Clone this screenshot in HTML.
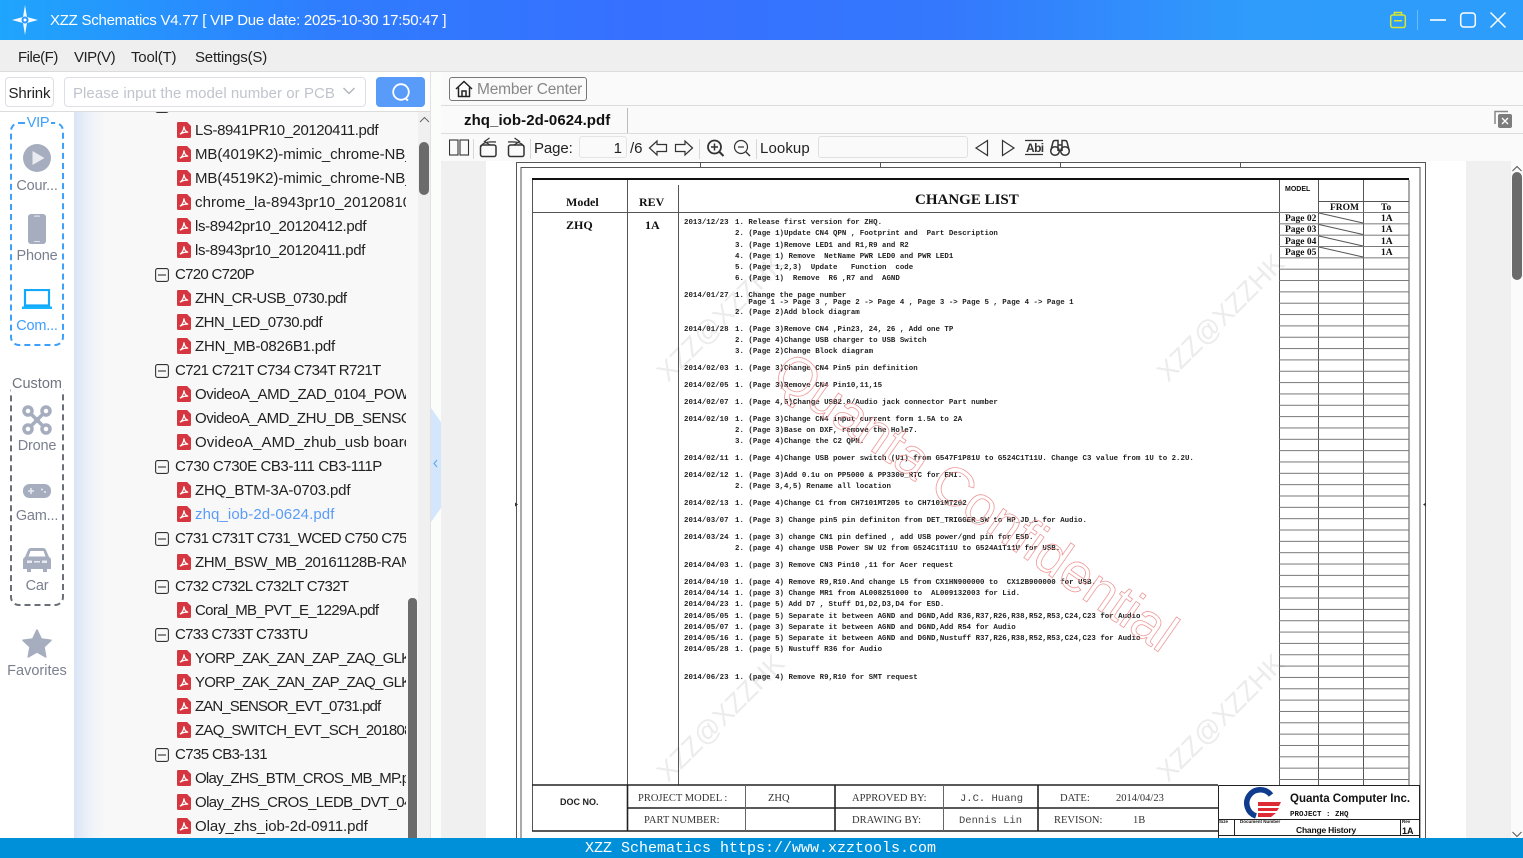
<!DOCTYPE html>
<html><head><meta charset="utf-8"><title>XZZ Schematics</title>
<style>
*{box-sizing:border-box}
html,body{margin:0;padding:0;width:1523px;height:858px;overflow:hidden;background:#fff;font-family:"Liberation Sans","Noto Sans CJK SC",sans-serif;color:#222}
.a{position:absolute;white-space:nowrap}
#tree{position:absolute;left:74px;top:112px;width:332px;height:726px;overflow:hidden;font-size:15px;letter-spacing:-.42px;color:#222}
#tree .rows{position:absolute;left:0;top:7px;width:332px}
#tree .r{position:relative;height:24px;line-height:24px;white-space:nowrap;padding-left:121px}
#tree .g{padding-left:101px}
#tree .r svg{position:absolute;left:103px;top:3px;width:14px;height:16px}
#tree .g svg{left:81px;top:5px;width:14px;height:14px}
.side{position:absolute;left:0;width:74px;text-align:center;font-size:14.5px;color:#7a8090;letter-spacing:-.2px;line-height:20px}
#doc{position:absolute;left:684px;top:1px;font:bold 7.4px/8px "Liberation Mono",monospace;letter-spacing:.02px;color:#222;white-space:pre}
#doc div{position:absolute;left:0}
#doc b{display:inline-block;width:51px;font-weight:bold}
.sep{position:absolute;top:139px;width:1px;height:20px;background:#d8d8d8}
.tb{position:absolute;font-size:15px;letter-spacing:-.1px;color:#222;white-space:nowrap;line-height:20px;top:139px}
.m{position:absolute;top:48px;font-size:15px;line-height:20px;white-space:nowrap}
</style></head><body>
<svg width="0" height="0" style="position:absolute"><defs>
<symbol id="pdf" viewBox="0 0 14 16"><path d="M0 1.2Q0 0 1.2 0H10L14 4V14.8Q14 16 12.8 16H1.2Q0 16 0 14.8Z" fill="#d5363f"/><path d="M3 12.2C5 11 6.6 8 7 4.5C7.4 8 9 10 11.2 10.2C9 10 5.5 10.6 3 12.2Z" fill="none" stroke="#fff" stroke-width="1.2"/></symbol>
<symbol id="minus" viewBox="0 0 14 14"><rect x=".6" y=".6" width="12.8" height="12.8" rx="2" fill="none" stroke="#333" stroke-width="1.1"/><path d="M3 7H11" stroke="#333" stroke-width="1.1"/></symbol>
</defs></svg>

<!-- title bar -->
<div class="a" style="left:0;top:0;width:1523px;height:40px;background:linear-gradient(90deg,#1fa5fd 0,#2f7cfe 22%,#3670ff 42%,#3478fd 62%,#2f9bfb 82%,#2d9dfb 100%)"></div>
<svg class="a" style="left:11px;top:5px" width="28" height="30" viewBox="0 0 28 30"><path d="M14 0L16 12L27 15L16 18L14 30L12 18L1 15L12 12Z" fill="#fff" opacity=".95"/><circle cx="14" cy="15" r="3.5" fill="#2a98fc"/><circle cx="14" cy="15" r="1.5" fill="#fff"/></svg>
<div class="a" style="left:50px;top:11px;color:#fff;font-size:15px;letter-spacing:-.25px;line-height:20px">XZZ Schematics V4.77 [ VIP Due date: 2025-10-30 17:50:47 ]</div>
<svg class="a" style="left:1385px;top:8px" width="130" height="24" viewBox="0 0 130 24">
<g fill="none" stroke="#d9e62d" stroke-width="1.5"><rect x="5.7" y="7" width="14.6" height="12.5" rx="2"/><path d="M9.5 7V4.5H16.5V7M9 12.7H17"/></g>
<path d="M32.5 2V22" stroke="#6cbcfb" stroke-width="1"/>
<path d="M45 12H61" stroke="#fff" stroke-width="1.6"/>
<rect x="75.7" y="5" width="14.6" height="14" rx="3" fill="none" stroke="#fff" stroke-width="1.5"/>
<path d="M105.5 4.5L120.5 19.5M120.5 4.5L105.5 19.5" stroke="#fff" stroke-width="1.5"/>
</svg>

<!-- menu -->
<div class="a" style="left:0;top:40px;width:1523px;height:32px;background:#efefef;border-bottom:1px solid #dcdcdc"></div>
<div class="m" style="left:18px;letter-spacing:-.5px">File(F)</div>
<div class="m" style="left:74px;letter-spacing:-.5px">VIP(V)</div>
<div class="m" style="left:131px;letter-spacing:-.2px">Tool(T)</div>
<div class="m" style="left:195px;letter-spacing:-.2px">Settings(S)</div>

<!-- left toolbar -->
<div class="a" style="left:0;top:72px;width:431px;height:40px;background:#fff;border-bottom:1px solid #dcdcdc"></div>
<div class="a" style="left:5px;top:77px;width:49px;height:30px;border:1px solid #dcdfe6;border-radius:4px;text-align:center;line-height:31px;font-size:15px;letter-spacing:-.1px">Shrink</div>
<div class="a" style="left:64px;top:77px;width:302px;height:30px;border:1px solid #dcdfe6;border-radius:4px;line-height:31px;font-size:15px;letter-spacing:.05px;color:#c0c4cc;padding-left:8px">Please input the model number or PCB</div>
<svg class="a" style="left:342px;top:86px" width="14" height="10" viewBox="0 0 14 10"><path d="M1.5 2L7 7.5L12.500 2" fill="none" stroke="#b0b4bc" stroke-width="1.4"/></svg>
<div class="a" style="left:376px;top:77px;width:49px;height:30px;background:#589bf9;border-radius:4px"></div>
<svg class="a" style="left:390px;top:81px" width="22" height="22" viewBox="0 0 22 22"><circle cx="11" cy="11" r="7.8" fill="none" stroke="#fff" stroke-width="1.8"/><path d="M15 17L18 19.5" stroke="#fff" stroke-width="1.8"/></svg>

<!-- sidebar -->
<div class="a" style="left:10px;top:122px;width:54px;height:224px;border:2px dashed #3da0fb;border-radius:9px"></div>
<div class="a" style="left:25px;top:113px;width:26px;height:20px;background:#fff;text-align:center;color:#3da0fb;font-size:14.5px;line-height:20px;letter-spacing:-.3px">VIP</div>
<svg class="a" style="left:23px;top:144px" width="28" height="28" viewBox="0 0 28 28"><circle cx="14" cy="14" r="14" fill="#a5adbf"/><path d="M9.5 7L21.5 14L9.5 21Z" fill="#e9ebf0"/></svg>
<div class="side" style="top:176px">Cour...</div>
<svg class="a" style="left:28px;top:214px" width="18" height="30" viewBox="0 0 18 30"><rect width="18" height="30" rx="3" fill="#a5adbf"/><rect x="6" y="1.5" width="6" height="1.3" rx=".6" fill="#dfe2e9"/><rect x="6" y="27" width="6" height="1" fill="#dfe2e9"/></svg>
<div class="side" style="top:246px">Phone</div>
<svg class="a" style="left:22px;top:289px" width="30" height="20" viewBox="0 0 30 20"><rect x="3" y="1" width="24" height="15.5" fill="none" stroke="#12a9fc" stroke-width="2.2"/><path d="M0 17.5H30V20H0Z" fill="#18b4fd"/></svg>
<div class="side" style="top:316px;color:#3d9dfb">Com...</div>

<div class="a" style="left:10px;top:384px;width:54px;height:222px;border:2px dashed #6a6f78;border-radius:9px"></div>
<div class="a" style="left:11px;top:374px;width:52px;height:20px;background:#fff;text-align:center;color:#6f7480;font-size:14.5px;line-height:20px;letter-spacing:0">Custom</div>
<svg class="a" style="left:22px;top:405px" width="30" height="30" viewBox="0 0 30 30"><g fill="none" stroke="#a5adbf" stroke-width="3.5"><circle cx="6" cy="6" r="4"/><circle cx="24" cy="6" r="4"/><circle cx="6" cy="24" r="4"/><circle cx="24" cy="24" r="4"/><path d="M8 8L22 22M22 8L8 22"/></g><circle cx="15" cy="15" r="3" fill="#a5adbf"/></svg>
<div class="side" style="top:436px">Drone</div>
<svg class="a" style="left:23px;top:484px" width="28" height="14" viewBox="0 0 28 14"><rect width="28" height="14" rx="6.5" fill="#a5adbf"/><path d="M5 7H11M8 4V10" stroke="#e9ebf0" stroke-width="1.5"/><circle cx="19" cy="5.5" r="1" fill="#e9ebf0"/><circle cx="22" cy="8" r="1" fill="#e9ebf0"/></svg>
<div class="side" style="top:506px">Gam...</div>
<svg class="a" style="left:23px;top:548px" width="28" height="24" viewBox="0 0 28 24"><path d="M5 2Q6 0 8 0H20Q22 0 23 2L26 9Q28 10 28 12V21H24V24H20V21H8V24H4V21H0V12Q0 10 2 9ZM7.5 3L5.5 8.5H22.5L20.5 3Z" fill="#a5adbf" fill-rule="evenodd"/><rect x="4" y="12.5" width="5" height="2.5" fill="#e9ebf0"/><rect x="19" y="12.5" width="5" height="2.5" fill="#e9ebf0"/><rect x="11" y="13" width="6" height="1.5" fill="#e9ebf0"/></svg>
<div class="side" style="top:576px">Car</div>
<svg class="a" style="left:22px;top:629px" width="30" height="29" viewBox="0 0 30 29"><path d="M15 1L19.3 10L29 11.3L22 18L23.8 28L15 23L6.2 28L8 18L1 11.3L10.7 10Z" fill="#a5adbf" stroke="#a5adbf" stroke-linejoin="round" stroke-width="1.5"/></svg>
<div class="side" style="top:661px;letter-spacing:0">Favorites</div>

<!-- tree -->
<div class="a" style="left:74px;top:112px;width:344px;height:726px;background:linear-gradient(90deg,#d9e4f5 0,#eef2f9 16px,#f8f8f8 32px,#f8f8f8 100%)"></div>
<div class="a" style="left:418px;top:112px;width:13px;height:726px;background:#f0f0f0"></div>
<div id="tree">
<svg style="position:absolute;left:81px;top:-13px;width:14px;height:14px"><use href="#minus"/></svg>
<div class="rows">
<div class="r"><svg><use href="#pdf"/></svg>LS-8941PR10_20120411.pdf</div>
<div class="r" style="letter-spacing:-.09px"><svg><use href="#pdf"/></svg>MB(4019K2)-mimic_chrome-NB_20120411.pdf</div>
<div class="r" style="letter-spacing:-.09px"><svg><use href="#pdf"/></svg>MB(4519K2)-mimic_chrome-NB_20120411.pdf</div>
<div class="r" style="letter-spacing:.1px"><svg><use href="#pdf"/></svg>chrome_la-8943pr10_20120810.pdf</div>
<div class="r" style="letter-spacing:-.34px"><svg><use href="#pdf"/></svg>ls-8942pr10_20120412.pdf</div>
<div class="r" style="letter-spacing:-.34px"><svg><use href="#pdf"/></svg>ls-8943pr10_20120411.pdf</div>
<div class="r g" style="letter-spacing:-.7px"><svg><use href="#minus"/></svg>C720 C720P</div>
<div class="r" style="letter-spacing:-.63px"><svg><use href="#pdf"/></svg>ZHN_CR-USB_0730.pdf</div>
<div class="r" style="letter-spacing:-.5px"><svg><use href="#pdf"/></svg>ZHN_LED_0730.pdf</div>
<div class="r" style="letter-spacing:-.2px"><svg><use href="#pdf"/></svg>ZHN_MB-0826B1.pdf</div>
<div class="r g" style="letter-spacing:-.64px"><svg><use href="#minus"/></svg>C721 C721T C734 C734T R721T</div>
<div class="r"><svg><use href="#pdf"/></svg>OvideoA_AMD_ZAD_0104_POWER.pdf</div>
<div class="r" style="letter-spacing:-.47px"><svg><use href="#pdf"/></svg>OvideoA_AMD_ZHU_DB_SENSOR.pdf</div>
<div class="r" style="letter-spacing:.08px"><svg><use href="#pdf"/></svg>OvideoA_AMD_zhub_usb board.pdf</div>
<div class="r g"><svg><use href="#minus"/></svg>C730 C730E CB3-111 CB3-111P</div>
<div class="r" style="letter-spacing:-.16px"><svg><use href="#pdf"/></svg>ZHQ_BTM-3A-0703.pdf</div>
<div class="r" style="color:#5b9cf8;letter-spacing:.1px"><svg><use href="#pdf"/></svg>zhq_iob-2d-0624.pdf</div>
<div class="r g" style="letter-spacing:-.65px"><svg><use href="#minus"/></svg>C731 C731T C731_WCED C750 C750T</div>
<div class="r"><svg><use href="#pdf"/></svg>ZHM_BSW_MB_20161128B-RAMP.pdf</div>
<div class="r g" style="letter-spacing:-.68px"><svg><use href="#minus"/></svg>C732 C732L C732LT C732T</div>
<div class="r" style="letter-spacing:-.66px"><svg><use href="#pdf"/></svg>Coral_MB_PVT_E_1229A.pdf</div>
<div class="r g" style="letter-spacing:-.72px"><svg><use href="#minus"/></svg>C733 C733T C733TU</div>
<div class="r" style="letter-spacing:-.75px"><svg><use href="#pdf"/></svg>YORP_ZAK_ZAN_ZAP_ZAQ_GLK_MB.pdf</div>
<div class="r" style="letter-spacing:-.75px"><svg><use href="#pdf"/></svg>YORP_ZAK_ZAN_ZAP_ZAQ_GLK_IO.pdf</div>
<div class="r" style="letter-spacing:-.9px"><svg><use href="#pdf"/></svg>ZAN_SENSOR_EVT_0731.pdf</div>
<div class="r" style="letter-spacing:-.7px"><svg><use href="#pdf"/></svg>ZAQ_SWITCH_EVT_SCH_20180808.pdf</div>
<div class="r g" style="letter-spacing:-.6px"><svg><use href="#minus"/></svg>C735 CB3-131</div>
<div class="r" style="letter-spacing:-.75px"><svg><use href="#pdf"/></svg>Olay_ZHS_BTM_CROS_MB_MP.pdf</div>
<div class="r" style="letter-spacing:-.6px"><svg><use href="#pdf"/></svg>Olay_ZHS_CROS_LEDB_DVT_0416.pdf</div>
<div class="r" style="letter-spacing:-.09px"><svg><use href="#pdf"/></svg>Olay_zhs_iob-2d-0911.pdf</div>
</div></div>
<div class="a" style="left:408px;top:598px;width:9px;height:240px;background:#6b6b6b;border-radius:4px 4px 0 0"></div>
<div class="a" style="left:419px;top:142px;width:10px;height:53px;background:#6b6b6b;border-radius:5px"></div>
<svg class="a" style="left:419px;top:116px" width="11" height="8" viewBox="0 0 11 8"><path d="M1 6L5.5 1.5L10 6" fill="none" stroke="#666" stroke-width="1"/></svg>

<!-- splitter -->
<div class="a" style="left:430px;top:72px;width:11px;height:766px;background:#fbfdfb;border-left:1px solid #e2e2e2"></div>
<svg class="a" style="left:431px;top:408px" width="10" height="114" viewBox="0 0 10 114"><path d="M0 0L10 14V100L0 114Z" fill="#d3e6fb"/><path d="M6 52L3 55.5L6 59" fill="none" stroke="#5ba3ee" stroke-width="1"/></svg>

<!-- right header -->
<div class="a" style="left:441px;top:72px;width:1082px;height:34px;background:#fafafa;border-bottom:1px solid #dcdcdc"></div>
<div class="a" style="left:449px;top:77px;width:138px;height:24px;border:1px solid #777;border-radius:3px;background:#fafafa"></div>
<svg class="a" style="left:455px;top:80px" width="18" height="18" viewBox="0 0 18 18"><path d="M1 9L9 1.5L17 9M3.5 7.5V16.5H14.5V7.5M7 16.5V11H11V16.500" fill="none" stroke="#222" stroke-width="1.5"/></svg>
<div class="a" style="left:477px;top:80px;color:#888;font-size:15.5px;letter-spacing:-.2px;line-height:20px">Member Center</div>
<div class="a" style="left:441px;top:106px;width:1082px;height:28px;background:#fafafa;border-bottom:1px solid #dcdcdc"></div>
<div class="a" style="left:627px;top:108px;width:1px;height:25px;background:#bbb"></div>
<div class="a" style="left:464px;top:111px;font-size:15px;font-weight:bold;letter-spacing:.07px;line-height:20px;color:#111">zhq_iob-2d-0624.pdf</div>
<svg class="a" style="left:1494px;top:110px" width="19" height="19" viewBox="0 0 19 19"><path d="M1 14V1.5H14" fill="none" stroke="#888" stroke-width="1.5"/><rect x="4" y="4" width="14" height="14" rx="2" fill="#7d7d7d"/><path d="M8 8L14 14M14 8L8 14" stroke="#fff" stroke-width="1.3"/></svg>

<!-- toolbar -->
<div class="a" style="left:441px;top:134px;width:1082px;height:27px;background:#fafafa"></div>
<svg class="a" style="left:449px;top:135px" width="625" height="25" viewBox="449 135 625 25">
<g fill="none" stroke="#333" stroke-width="1.1">
<rect x="449.5" y="140" width="8.5" height="15"/><rect x="460" y="140" width="8.5" height="15"/>
<rect x="480.5" y="145" width="15.5" height="11.5" rx="2" stroke-width="1.5"/><path d="M481 147Q482 141 496 142M489.5 138L484.5 141.500L490 145" stroke-width="1.2"/>
<rect x="508.5" y="145" width="15.5" height="11.5" rx="2" stroke-width="1.5"/><path d="M524 147Q522 141 508 142M514.500 138L519.5 141.5L514 145" stroke-width="1.2"/>
<path d="M649.5 148L657 141V144.5H666.5V151.5H657V155Z" stroke-width="1.2"/>
<path d="M692.5 148L685 141V144.5H675.5V151.5H685V155Z" stroke-width="1.2"/>
<circle cx="714.5" cy="147" r="6.5" stroke-width="1.8"/><path d="M719.5 152L723.5 156" stroke-width="2"/><path d="M711 147H718M714.5 143.5V150.5" stroke-width="1.5"/>
<circle cx="741" cy="147" r="6.5" stroke-width="1.2"/><path d="M746 152L750 156" stroke-width="1.4"/><path d="M738 147H744" stroke-width="1.2"/>
<path d="M987.5 140.5L976 148L987.5 155.5Z" stroke-width="1.2"/>
<path d="M1002.5 140.5L1014 148L1002.5 155.5Z" stroke-width="1.2"/>
<path d="M1025 140.5H1043M1025 154.5H1043" stroke-width="1.2"/>
<circle cx="1055" cy="151" r="4.3" stroke-width="1.5"/><circle cx="1065" cy="151" r="4.3" stroke-width="1.5"/><path d="M1051 150L1053 142Q1053.5 140.5 1055 140.5H1058V151M1069 150L1067 142Q1066.5 140.5 1065 140.5H1062V151M1058 145H1062" stroke-width="1.5"/>
</g></svg>
<div class="a" style="left:1026px;top:141px;font-size:12px;font-weight:bold;letter-spacing:-.6px;line-height:14px;color:#333">Abi</div>
<div class="sep" style="left:473px"></div><div class="sep" style="left:530px"></div><div class="sep" style="left:699px"></div><div class="sep" style="left:756px"></div>
<div class="tb" style="left:534px">Page:</div>
<div class="a" style="left:579px;top:136px;width:48px;height:22px;border:1px solid #e4e4e4;border-radius:3px;background:#fafafa;text-align:right;font-size:15px;line-height:23px;padding-right:4px">1</div>
<div class="tb" style="left:630px">/6</div>
<div class="tb" style="left:760px;letter-spacing:.1px">Lookup</div>
<div class="a" style="left:818px;top:136px;width:150px;height:22px;border:1px solid #e0e0e0;border-radius:3px;background:#fafafa"></div>

<!-- pdf viewport -->
<div class="a" style="left:441px;top:161px;width:1070px;height:677px;background:#f0f0f0"></div>
<div class="a" style="left:486px;top:161px;width:980px;height:677px;background:#fff"></div>
<div class="a" style="left:1511px;top:161px;width:12px;height:677px;background:#fbfbfb"></div>
<div class="a" style="left:1512px;top:172px;width:10px;height:108px;background:#6b6b6b;border-radius:5px"></div>
<svg class="a" style="left:1511px;top:165px" width="12" height="7" viewBox="0 0 12 7"><path d="M1.5 6L6 1.5L10.5 6" fill="none" stroke="#555" stroke-width="1"/></svg>
<svg class="a" style="left:1511px;top:831px" width="12" height="7" viewBox="0 0 12 7"><path d="M1.5 1L6 5.5L10.5 1" fill="none" stroke="#555" stroke-width="1"/></svg>

<svg class="a" style="left:0;top:0" width="1523" height="858" viewBox="0 0 1523 858">
<defs><clipPath id="vp"><rect x="486" y="161" width="980" height="677"/></clipPath>
<pattern id="rowp" patternUnits="userSpaceOnUse" x="1279" y="212" width="140" height="11.34"><path d="M0 .5H130" stroke="#777" stroke-width="1"/></pattern></defs>
<g clip-path="url(#vp)">
<!-- watermarks -->
<g font-family="Liberation Sans, sans-serif" font-size="27" fill="#ececec">
<text transform="translate(668,383) rotate(-45)">XZZ@XZZHK</text>
<text transform="translate(1168,383) rotate(-45)">XZZ@XZZHK</text>
<text transform="translate(668,783) rotate(-45)">XZZ@XZZHK</text>
<text transform="translate(1168,783) rotate(-45)">XZZ@XZZHK</text>
</g>
<g fill="none" stroke="#555" stroke-width="1">
<rect x="516.5" y="162.5" width="909" height="700"/>
<rect x="521" y="167.5" width="899" height="690"/>
<path d="M700.5 163V167M880.5 163V167M1060.5 163V167M1240.5 163V167"/>
<path d="M627.5 180V831M678.5 185V785M532.5 180V831M532 212.5H1280"/>
<path d="M1279.5 180V785M1318.5 180V785M1363.5 180V785M1409 180V785M1318 201.5H1409"/>
<path d="M1319 213L1363 223M1319 224.5L1363 234.5M1319 236L1363 246M1319 247L1363 257"/>
</g>
<rect x="1279" y="212" width="130" height="573" fill="url(#rowp)"/>
<rect x="532" y="178" width="877" height="2" fill="#111"/>
<path d="M518 504.5l-3 -2v4zM1423 504.5l3 -2v4z" fill="#333"/>
<g font-family="Liberation Serif, serif" font-weight="bold" fill="#111">
<text x="566" y="206" font-size="12">Model</text>
<text x="639" y="206" font-size="12">REV</text>
<text x="915" y="204" font-size="15">CHANGE LIST</text>
<text x="566" y="229" font-size="12">ZHQ</text>
<text x="645" y="229" font-size="12">1A</text>
<text x="1330" y="210" font-size="9.5">FROM</text>
<text x="1381" y="210" font-size="9.5">To</text>
<g font-size="9.5">
<text x="1285" y="221">Page 02</text><text x="1285" y="232">Page 03</text><text x="1285" y="244">Page 04</text><text x="1285" y="255">Page 05</text>
<text x="1381" y="221">1A</text><text x="1381" y="232">1A</text><text x="1381" y="244">1A</text><text x="1381" y="255">1A</text>
</g></g>
<text x="1285" y="191" font-family="Liberation Sans, sans-serif" font-weight="bold" font-size="7" fill="#111">MODEL</text>

<!-- title block -->
<path d="M532 785H1218M532 831H1218M627 808H1218M835 785V831M1038 785V831M627.5 785V831" stroke="#222" stroke-width="1.6" fill="none"/>
<path d="M745.5 785V831M943.5 785V831" stroke="#666" stroke-width="1" fill="none"/>
<rect x="1218" y="785" width="202" height="53" fill="#fff"/>
<path d="M1218.5 785.5H1419.5V838M1218.5 785.5V838M1218 819.5H1420M1218 835.5H1420M1234.5 820V836M1400.5 820V836" stroke="#222" stroke-width="1" fill="none"/>
<g font-family="Liberation Serif, serif" font-size="10.5" fill="#333">
<text x="638" y="801">PROJECT MODEL :</text><text x="768" y="801">ZHQ</text>
<text x="852" y="801">APPROVED BY:</text><text x="1060" y="801">DATE:</text><text x="1116" y="801">2014/04/23</text>
<text x="644" y="823">PART NUMBER:</text><text x="852" y="823">DRAWING BY:</text>
<text x="1054" y="823">REVISON:</text><text x="1133" y="823">1B</text>
</g>
<g font-family="Liberation Mono, monospace" font-size="10.5" fill="#444">
<text x="960" y="801">J.C. Huang</text><text x="959" y="823">Dennis Lin</text></g>
<text x="560" y="805" font-family="Liberation Sans, sans-serif" font-weight="bold" font-size="9" fill="#222">DOC NO.</text>
<path d="M1271 795A13.5 13.5 0 1 0 1256 816" fill="none" stroke="#0f3c8c" stroke-width="5.5"/>
<path d="M1258 802H1281L1279 806H1258ZM1258 808H1279L1277 811H1258ZM1258 813H1276L1271 817H1258Z" fill="#dd2a34"/>
<text x="1290" y="802" font-family="Liberation Sans, sans-serif" font-weight="bold" font-size="11.5" fill="#111">Quanta Computer Inc.</text>
<text x="1290" y="816" font-family="Liberation Mono, monospace" font-weight="bold" font-size="7.5" fill="#111">PROJECT : ZHQ</text>
<text x="1219" y="823" font-family="Liberation Sans, sans-serif" font-weight="bold" font-size="4.5" fill="#111">Size</text>
<text x="1240" y="823" font-family="Liberation Sans, sans-serif" font-weight="bold" font-size="4.5" fill="#111">Document Number</text>
<text x="1402" y="823" font-family="Liberation Sans, sans-serif" font-weight="bold" font-size="4.5" fill="#111">Rev</text>
<text x="1296" y="833" font-family="Liberation Sans, sans-serif" font-weight="bold" font-size="8.5" letter-spacing="-.2" fill="#111">Change History</text>
<text x="1402" y="834" font-family="Liberation Sans, sans-serif" font-weight="bold" font-size="9" fill="#111">1A</text>
</g></svg>

<div id="doc">
<div style="top:218px"><b>2013/12/23</b>1. Release first version for ZHQ.</div>
<div style="top:229px"><b></b>2. (Page 1)Update CN4 QPN , Footprint and  Part Description</div>
<div style="top:241px"><b></b>3. (Page 1)Remove LED1 and R1,R9 and R2</div>
<div style="top:252px"><b></b>4. (Page 1) Remove  NetName PWR LED0 and PWR LED1</div>
<div style="top:263px"><b></b>5. (Page 1,2,3)  Update   Function  code</div>
<div style="top:274px"><b></b>6. (Page 1)  Remove  R6 ,R7 and  AGND</div>
<div style="top:291px"><b>2014/01/27</b>1. Change the page number</div>
<div style="top:298px"><b></b>   Page 1 -&gt; Page 3 , Page 2 -&gt; Page 4 , Page 3 -&gt; Page 5 , Page 4 -&gt; Page 1</div>
<div style="top:308px"><b></b>2. (Page 2)Add block diagram</div>
<div style="top:325px"><b>2014/01/28</b>1. (Page 3)Remove CN4 ,Pin23, 24, 26 , Add one TP</div>
<div style="top:336px"><b></b>2. (Page 4)Change USB charger to USB Switch</div>
<div style="top:347px"><b></b>3. (Page 2)Change Block diagram</div>
<div style="top:364px"><b>2014/02/03</b>1. (Page 3)Change CN4 Pin5 pin definition</div>
<div style="top:381px"><b>2014/02/05</b>1. (Page 3)Remove CN4 Pin10,11,15</div>
<div style="top:398px"><b>2014/02/07</b>1. (Page 4,5)Change USB2.0/Audio jack connector Part number</div>
<div style="top:415px"><b>2014/02/10</b>1. (Page 3)Change CN4 input current form 1.5A to 2A</div>
<div style="top:426px"><b></b>2. (Page 3)Base on DXF, remove the Hole7.</div>
<div style="top:437px"><b></b>3. (Page 4)Change the C2 QPN.</div>
<div style="top:454px"><b>2014/02/11</b>1. (Page 4)Change USB power switch (U1) from G547F1P81U to G524C1T11U. Change C3 value from 1U to 2.2U.</div>
<div style="top:471px"><b>2014/02/12</b>1. (Page 3)Add 0.1u on PP5000 &amp; PP3300_RTC for EMI.</div>
<div style="top:482px"><b></b>2. (Page 3,4,5) Rename all location</div>
<div style="top:499px"><b>2014/02/13</b>1. (Page 4)Change C1 from CH7101MT205 to CH7101MT202</div>
<div style="top:516px"><b>2014/03/07</b>1. (Page 3) Change pin5 pin definiton from DET_TRIGGER_SW to HP_JD_L for Audio.</div>
<div style="top:533px"><b>2014/03/24</b>1. (page 3) change CN1 pin defined , add USB power/gnd pin for ESD.</div>
<div style="top:544px"><b></b>2. (page 4) change USB Power SW U2 from G524C1T11U to G524A1T11U for USB.</div>
<div style="top:561px"><b>2014/04/03</b>1. (page 3) Remove CN3 Pin10 ,11 for Acer request</div>
<div style="top:578px"><b>2014/04/10</b>1. (page 4) Remove R9,R10.And change L5 from CX1HN900000 to  CX12B900000 for USB.</div>
<div style="top:589px"><b>2014/04/14</b>1. (page 3) Change MR1 from AL008251000 to  AL009132003 for Lid.</div>
<div style="top:600px"><b>2014/04/23</b>1. (page 5) Add D7 , Stuff D1,D2,D3,D4 for ESD.</div>
<div style="top:612px"><b>2014/05/05</b>1. (page 5) Separate it between AGND and DGND,Add R36,R37,R26,R38,R52,R53,C24,C23 for Audio</div>
<div style="top:623px"><b>2014/05/07</b>1. (page 3) Separate it between AGND and DGND,Add R54 for Audio</div>
<div style="top:634px"><b>2014/05/16</b>1. (page 5) Separate it between AGND and DGND,Nustuff R37,R26,R38,R52,R53,C24,C23 for Audio</div>
<div style="top:645px"><b>2014/05/28</b>1. (page 5) Nustuff R36 for Audio</div>
<div style="top:673px"><b>2014/06/23</b>1. (page 4) Remove R9,R10 for SMT request</div>
</div>

<svg class="a" style="left:0;top:0;pointer-events:none" width="1523" height="838" viewBox="0 0 1523 838">
<text transform="translate(770,380) rotate(35)" font-family="Liberation Sans, sans-serif" font-size="54" fill="none" stroke="#ee9a9a" stroke-width=".8">Quanta Confidential</text>
</svg>

<!-- status -->
<div class="a" style="left:0;top:838px;width:1523px;height:20px;overflow:hidden;background:#0090d9;color:#fff;font:15px/22px 'Liberation Mono',monospace;padding-left:585px">XZZ Schematics https://www.xzztools.com</div>
</body></html>
